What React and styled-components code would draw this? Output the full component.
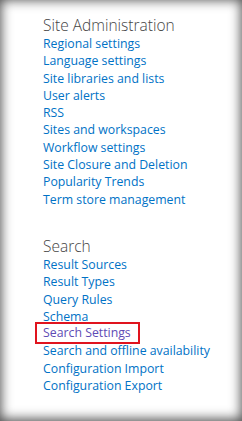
import styled, { createGlobalStyle } from 'styled-components';

const Global = createGlobalStyle`
  html, body {
    margin: 0;
    padding: 0;
    background: #ffffff;
  }
`;

const Frame = styled.div`
  width: 242px;
  height: 421px;
  box-sizing: border-box;
  padding: 15px 0 0 43px;
  background: #ffffff;
  box-shadow: inset 0 -1px 12px 1px rgba(0, 0, 0, 0.7);
  font-family: 'Open Sans', 'Noto Sans', sans-serif;
`;

const Section = styled.section`
  margin-bottom: ${(p) => p.gap || 0}px;
`;

const Heading = styled.h3`
  margin: 0 0 0;
  font-size: 15.5px;
  font-weight: 300;
  line-height: 20px;
  color: #444444;
`;

const LinkList = styled.ul`
  list-style: none;
  margin: 0;
  padding: 0;
`;

const Item = styled.li`
  line-height: 17.3px;
  font-size: 12.3px;
`;

const Link = styled.a`
  color: ${(p) => (p.visited ? '#5e4bb5' : '#0072c6')};
  text-decoration: none;
  ${(p) =>
    p.highlighted &&
    `
    display: inline-block;
    margin: -3px 0 -3px -8px;
    padding: 0 7px 0 6px;
    border: 2px solid #e0141e;
    line-height: 18px;
    vertical-align: top;
  `}
`;

const sections = [
  {
    title: 'Site Administration',
    links: [
      'Regional settings',
      'Language settings',
      'Site libraries and lists',
      'User alerts',
      'RSS',
      'Sites and workspaces',
      'Workflow settings',
      'Site Closure and Deletion',
      'Popularity Trends',
      'Term store management',
    ],
  },
  {
    title: 'Search',
    links: [
      'Result Sources',
      'Result Types',
      'Query Rules',
      'Schema',
      'Search Settings',
      'Search and offline availability',
      'Configuration Import',
      'Configuration Export',
    ],
  },
];

export default function App() {
  return (
    <>
      <Global />
      <Frame>
        {sections.map((s, i) => (
          <Section key={s.title} gap={i === 0 ? 28 : 0}>
            <Heading>{s.title}</Heading>
            <LinkList>
              {s.links.map((l) => {
                const hl = l === 'Search Settings';
                return (
                  <Item key={l}>
                    <Link href="#" visited={hl} highlighted={hl}>
                      {l}
                    </Link>
                  </Item>
                );
              })}
            </LinkList>
          </Section>
        ))}
      </Frame>
    </>
  );
}
